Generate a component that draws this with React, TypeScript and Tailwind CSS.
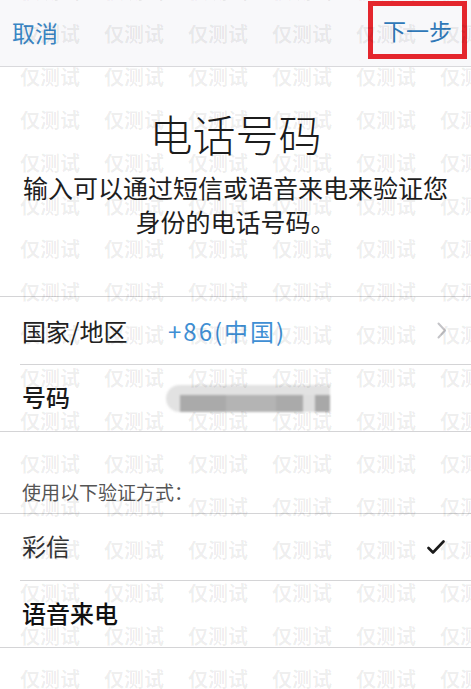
import React from "react";

const FONT = '"Noto Sans CJK SC", "Noto Sans", sans-serif';

function Watermark() {
  const rows = Array.from({ length: 17 });
  const cols = Array.from({ length: 6 });
  return (
    <div className="pointer-events-none absolute left-[20px] top-[-31px] flex flex-col">
      {rows.map((_, r) => (
        <div key={r} className="flex h-[43px] items-center gap-[24px]">
          {cols.map((_, c) => (
            <span
              key={c}
              className="w-[60px] shrink-0 whitespace-nowrap text-[20px] font-bold leading-none text-black/[0.075]"
            >
              仅测试
            </span>
          ))}
        </div>
      ))}
    </div>
  );
}

function Chevron() {
  return (
    <svg width="10" height="17" viewBox="0 0 10 17" fill="none">
      <path d="M1.5 1.5 L8 8.5 L1.5 15.5" stroke="#c4c4c8" strokeWidth="2" strokeLinecap="round" strokeLinejoin="round" />
    </svg>
  );
}

function Check() {
  return (
    <svg width="18" height="15" viewBox="0 0 18 15" fill="none">
      <path d="M1.5 8 L6 12.5 L16.5 1.5" stroke="#1a1a1a" strokeWidth="2.6" strokeLinecap="round" strokeLinejoin="round" />
    </svg>
  );
}

export default function App() {
  return (
    <div
      className="relative h-[689px] w-[471px] overflow-hidden bg-white"
      style={{ fontFamily: FONT }}
    >
      {/* nav bar */}
      <div className="flex h-[67px] items-center justify-between border-b border-[#d9d9dc] bg-[#f8f8fa] pl-[12px] pr-[4px]">
        <span className="mb-[2px] text-[23px] leading-none text-[#3a86c4]">取消</span>
        <div className="mb-[6px] flex h-[58px] w-[99px] items-center justify-center border-[5px] border-[#e4262d]">
          <span className="text-[23px] leading-none text-[#2f78b8]">下一步</span>
        </div>
      </div>

      {/* header */}
      <div className="flex flex-col items-center pt-[45px]">
        <div className="text-[43px] font-light leading-[43px] text-[#1c1c1c]">电话号码</div>
        <div className="mt-[15px] text-center text-[25px] leading-[34px] text-[#1e1e1e]">
          输入可以通过短信或语音来电来验证您
          <br />
          身份的电话号码。
        </div>
      </div>

      {/* phone section */}
      <div className="mt-[58px] border-y border-[#d4d4d6]">
        <div className="flex h-[67px] items-center pl-[22px] pr-[24px]">
          <span className="w-[146px] text-[24px] leading-none text-[#222]">国家/地区</span>
          <span className="flex-1 text-[24px] leading-none tracking-[2px] text-[#3f8fd4]">+86(中国)</span>
          <Chevron />
        </div>
        <div className="ml-[20px] h-px bg-[#d4d4d6]" />
        <div className="flex h-[66px] items-center pl-[22px]">
          <span className="mb-[3px] w-[144px] text-[24px] font-medium leading-none text-[#1a1a1a]">号码</span>
          <div className="relative h-[27px] w-[164px] blur-[1px]">
            <div className="absolute inset-0 rounded-l-full bg-[#e2e2e2]" />
            <div className="absolute bottom-0 left-[14px] top-[10px] w-[123px] bg-[#aaaaaa]" />
            <div className="absolute bottom-0 left-[60px] top-[10px] w-[50px] bg-[#b4b4b4]" />
            <div className="absolute bottom-0 left-[137px] top-[10px] w-[12px] bg-[#dedede]" />
            <div className="absolute bottom-0 left-[149px] top-[10px] w-[15px] bg-[#a8a8a8]" />
          </div>
        </div>
      </div>

      {/* verification method */}
      <div className="flex h-[81px] items-end pb-[12px] pl-[22px]">
        <span className="text-[19px] leading-none text-[#555]">使用以下验证方式：</span>
      </div>
      <div className="border-y border-[#d4d4d6]">
        <div className="flex h-[66px] items-center justify-between pl-[22px] pr-[26px]">
          <span className="mb-[3px] text-[24px] leading-none text-[#333]">彩信</span>
          <Check />
        </div>
        <div className="ml-[20px] h-px bg-[#d4d4d6]" />
        <div className="flex h-[66px] items-center pl-[22px]">
          <span className="mb-[3px] text-[24px] font-medium leading-none text-[#111]">语音来电</span>
        </div>
      </div>

      <Watermark />
    </div>
  );
}
